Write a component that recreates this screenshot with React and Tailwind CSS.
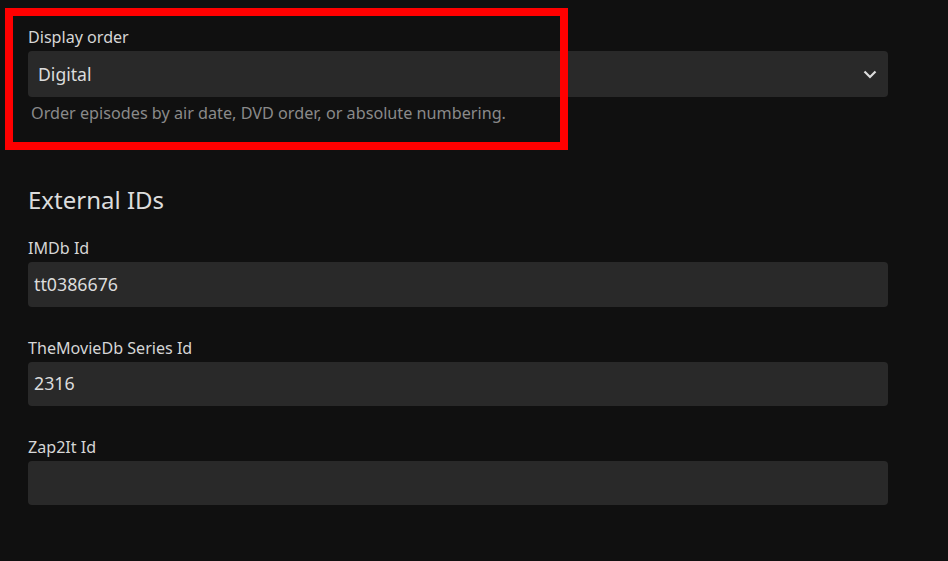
import React from "react";

const font = { fontFamily: '"Noto Sans", "Open Sans", sans-serif' };

function Label({ children, mt }) {
  return (
    <div className={`h-[24px] leading-[24px] text-[16.1px] text-[#d6d6d6] mb-[2px] ${mt}`}>
      {children}
    </div>
  );
}

function Input({ value }) {
  return (
    <div className="h-[44.5px] rounded-[4px] bg-[#292929] pl-[6px] flex items-center text-[17.8px] text-[#dcdcdc]">
      {value}
    </div>
  );
}

export default function App() {
  return (
    <div
      className="relative w-[948px] h-[561px] bg-[#101010] overflow-hidden"
      style={font}
    >
      <div className="w-[860px] ml-[28px] pt-[25px]">
        <Label>Display order</Label>
        <div className="h-[46px] rounded-[4px] bg-[#292929] pl-[10px] pr-[11px] flex items-center justify-between text-[17.6px] text-[#dcdcdc]">
          <span>Digital</span>
          <svg width="14" height="9" viewBox="0 0 14 9" fill="none">
            <path d="M1.5 1.5 L7 7 L12.5 1.5" stroke="#dcdcdc" strokeWidth="2.2" />
          </svg>
        </div>
        <div className="mt-[4px] ml-[3px] h-[24px] leading-[24px] text-[16.2px] text-[#8a8a8a]">
          Order episodes by air date, DVD order, or absolute numbering.
        </div>

        <h2 className="mt-[60px] h-[29px] leading-[29px] text-[24px] text-[#dcdcdc]">
          External IDs
        </h2>

        <Label mt="mt-[22px]">IMDb Id</Label>
        <Input value="tt0386676" />

        <Label mt="mt-[29px]">TheMovieDb Series Id</Label>
        <Input value="2316" />

        <Label mt="mt-[28.5px]">Zap2It Id</Label>
        <Input value="" />
      </div>

      <div className="absolute left-[5px] top-[8px] w-[563px] h-[142px] border-[8px] border-[#ff0000]" />
    </div>
  );
}
